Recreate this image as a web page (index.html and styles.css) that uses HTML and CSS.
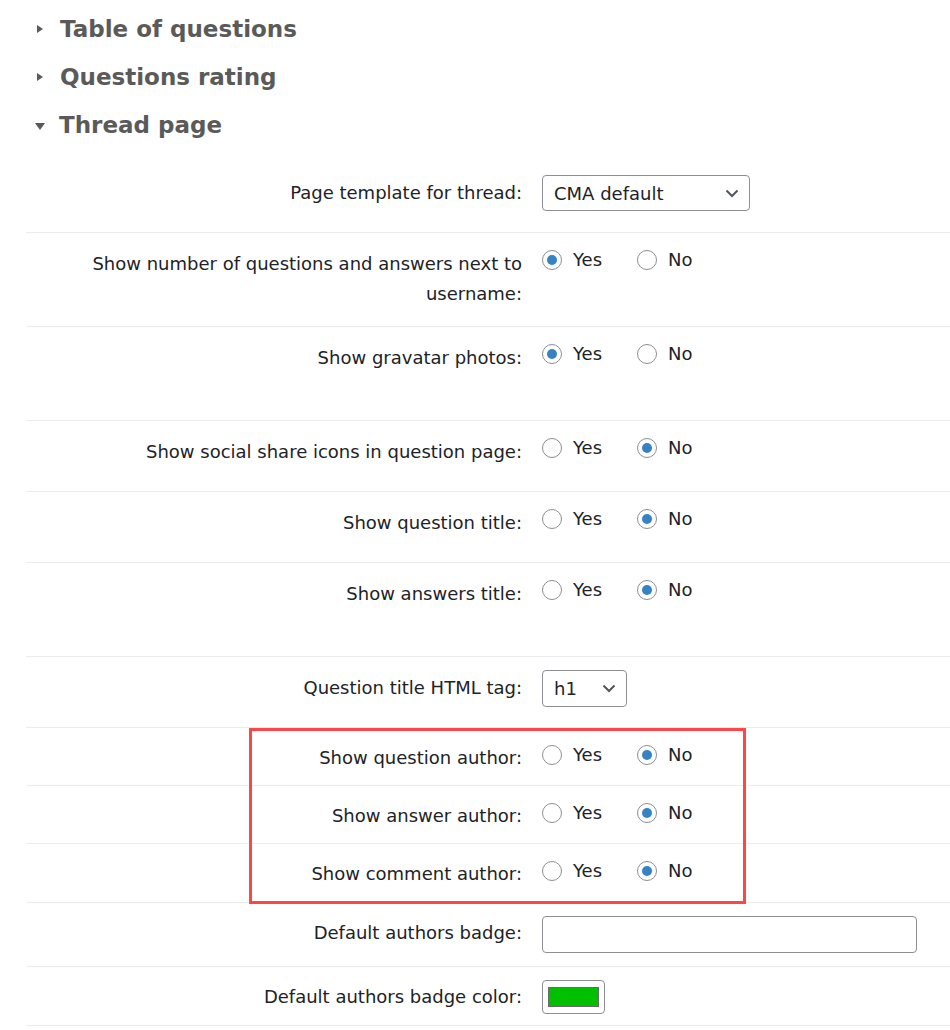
FILE: index.html
```html
<!DOCTYPE html>
<html lang="en">
<head>
    <meta charset="UTF-8">
    <title>Settings - Thread page</title>
    <link rel="stylesheet" href="styles.css">
</head>
<body>
    <!-- Collapsible sections -->
    <div class="sections">
        <h2 class="section closed"><span class="arrow"></span>Table of questions</h2>
        <h2 class="section closed"><span class="arrow"></span>Questions rating</h2>
        <h2 class="section open"><span class="arrow"></span>Thread page</h2>
    </div>

    <div class="form-table">
        <div class="row row-md">
            <div class="label">Page template for thread:</div>
            <div class="field field-select">
                <div class="select wide">CMA default
                    <svg class="chev" width="14" height="9" viewBox="0 0 14 9"><path d="M1.5 1.5 L7 7 L12.5 1.5" fill="none" stroke="#50575e" stroke-width="2"/></svg>
                </div>
            </div>
        </div>

        <div class="row row-lg">
            <div class="label">Show number of questions and answers next to username:</div>
            <div class="field">
                <label class="opt"><input type="radio" name="r1" checked> Yes</label>
                <label class="opt"><input type="radio" name="r1"> No</label>
            </div>
        </div>

        <div class="row row-lg">
            <div class="label">Show gravatar photos:</div>
            <div class="field">
                <label class="opt"><input type="radio" name="r2" checked> Yes</label>
                <label class="opt"><input type="radio" name="r2"> No</label>
            </div>
        </div>

        <div class="row row-md">
            <div class="label">Show social share icons in question page:</div>
            <div class="field">
                <label class="opt"><input type="radio" name="r3"> Yes</label>
                <label class="opt"><input type="radio" name="r3" checked> No</label>
            </div>
        </div>

        <div class="row row-md">
            <div class="label">Show question title:</div>
            <div class="field">
                <label class="opt"><input type="radio" name="r4"> Yes</label>
                <label class="opt"><input type="radio" name="r4" checked> No</label>
            </div>
        </div>

        <div class="row row-lg">
            <div class="label">Show answers title:</div>
            <div class="field">
                <label class="opt"><input type="radio" name="r5"> Yes</label>
                <label class="opt"><input type="radio" name="r5" checked> No</label>
            </div>
        </div>

        <div class="row row-md">
            <div class="label">Question title HTML tag:</div>
            <div class="field field-select">
                <div class="select small">h1
                    <svg class="chev" width="14" height="9" viewBox="0 0 14 9"><path d="M1.5 1.5 L7 7 L12.5 1.5" fill="none" stroke="#50575e" stroke-width="2"/></svg>
                </div>
            </div>
        </div>

        <!-- highlighted rows -->
        <div class="highlight">
            <div class="row">
                <div class="label">Show question author:</div>
                <div class="field">
                    <label class="opt"><input type="radio" name="r6"> Yes</label>
                    <label class="opt"><input type="radio" name="r6" checked> No</label>
                </div>
            </div>
            <div class="row">
                <div class="label">Show answer author:</div>
                <div class="field">
                    <label class="opt"><input type="radio" name="r7"> Yes</label>
                    <label class="opt"><input type="radio" name="r7" checked> No</label>
                </div>
            </div>
            <div class="row">
                <div class="label">Show comment author:</div>
                <div class="field">
                    <label class="opt"><input type="radio" name="r8"> Yes</label>
                    <label class="opt"><input type="radio" name="r8" checked> No</label>
                </div>
            </div>
        </div>

        <div class="row row-input">
            <div class="label">Default authors badge:</div>
            <div class="field field-select">
                <input type="text" class="text-input">
            </div>
        </div>

        <div class="row row-input">
            <div class="label">Default authors badge color:</div>
            <div class="field field-select">
                <div class="color-btn"><span class="swatch"></span></div>
            </div>
        </div>
    </div>
</body>
</html>
```

FILE: styles.css
```css
* {
    box-sizing: border-box;
}
body {
    margin: 0;
    background-color: #fff;
    font-family: 'DejaVu Sans', Verdana, sans-serif;
    color: #1d2327;
    font-size: 18px;
}
.sections {
    padding: 5px 0 0 0;
}
.section {
    margin: 0;
    height: 48px;
    line-height: 48px;
    font-size: 23px;
    font-weight: bold;
    color: #5a5a5a;
    display: flex;
    align-items: center;
}
.section .arrow {
    width: 0;
    height: 0;
    margin: 0 17px 0 37px;
}
.section.closed .arrow {
    border-top: 4.5px solid transparent;
    border-bottom: 4.5px solid transparent;
    border-left: 6px solid #5a5a5a;
}
.section.open .arrow {
    margin: 2px 14px 0 35px;
    border-left: 5px solid transparent;
    border-right: 5px solid transparent;
    border-top: 7px solid #5a5a5a;
}
.form-table {
    margin: 13px 0 0 26px;
}
.row {
    display: grid;
    grid-template-columns: 516px 1fr;
    border-bottom: 1px solid #ececec;
    min-height: 58px;
}
.row-md {
    min-height: 71px;
}
.row-lg {
    min-height: 94px;
}
.row-input {
    min-height: 64px;
}
.row:last-child {
    min-height: 59px;
}
.label {
    text-align: right;
    padding: 15px 20px 12px 0;
    line-height: 30px;
}
.row-md .label,
.row-lg .label {
    padding-top: 16px;
}
.field {
    padding-top: 17px;
    display: flex;
    align-items: flex-start;
}
.field-select {
    padding-top: 13px;
}
.opt {
    display: inline-flex;
    align-items: center;
    margin-right: 35px;
    line-height: 20px;
}
.opt input {
    appearance: none;
    -webkit-appearance: none;
    width: 20px;
    height: 20px;
    margin: 0 11px 0 0;
    border: 1px solid #8c8f94;
    border-radius: 50%;
    background: #fff;
    position: relative;
}
.opt input:checked::before {
    content: "";
    position: absolute;
    left: 4px;
    top: 4px;
    width: 10px;
    height: 10px;
    border-radius: 50%;
    background-color: #3582c4;
}
.select {
    height: 37px;
    border: 1px solid #8c8f94;
    border-radius: 4px;
    display: flex;
    align-items: center;
    justify-content: space-between;
    padding: 0 10px 0 11px;
    font-size: 18px;
}
.select.wide {
    width: 208px;
    height: 36px;
}
.select.small {
    width: 85px;
}
.chev {
    display: block;
}
.text-input {
    width: 375px;
    height: 37px;
    border: 1px solid #8c8f94;
    border-radius: 4px;
    margin: 0;
    font-size: 18px;
}
.color-btn {
    width: 63px;
    height: 34px;
    border: 1px solid #8c8f94;
    border-radius: 4px;
    padding: 6px 5px;
    background: #fff;
}
.swatch {
    display: block;
    height: 100%;
    background-color: #00c000;
    border: 1px solid #6b6b6b;
}
.highlight {
    position: relative;
}
.highlight::after {
    content: "";
    position: absolute;
    left: 223px;
    top: 0;
    width: 491px;
    bottom: -1px;
    border: 3px solid #ff4646;
    pointer-events: none;
}
```
